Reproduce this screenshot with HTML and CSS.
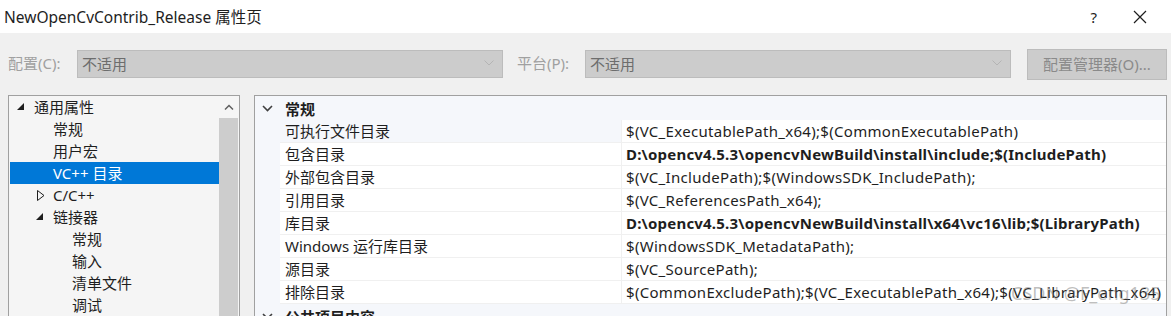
FILE: index.html
```html
<!DOCTYPE html>
<html lang="zh-CN">
<head>
    <meta charset="UTF-8">
    <title>NewOpenCvContrib_Release 属性页</title>
    <link rel="stylesheet" href="styles.css">
</head>
<body>
    <div class="dialog">
        <header class="titlebar">
            <span class="title">NewOpenCvContrib_Release 属性页</span>
            <div class="title-buttons">
                <span class="help">?</span>
                <svg class="close" width="14" height="14" viewBox="0 0 14 14">
                    <path d="M1 1 L13 13 M13 1 L1 13" stroke="#1e1e1e" stroke-width="1.2" fill="none"/>
                </svg>
            </div>
        </header>

        <div class="toolbar">
            <label class="field-label">配置(C):</label>
            <div class="combo">
                <span>不适用</span>
                <svg class="combo-arrow" width="10" height="6" viewBox="0 0 10 6"><path d="M0.5 0.5 L5 5 L9.5 0.5" stroke="#b4b4b4" fill="none"/></svg>
            </div>
            <label class="field-label second">平台(P):</label>
            <div class="combo">
                <span>不适用</span>
                <svg class="combo-arrow" width="10" height="6" viewBox="0 0 10 6"><path d="M0.5 0.5 L5 5 L9.5 0.5" stroke="#b4b4b4" fill="none"/></svg>
            </div>
            <button class="manager">配置管理器(O)...</button>
        </div>

        <div class="main">
            <div class="tree">
                <ul class="tree-list">
                    <li class="node lvl0"><svg class="exp" width="8" height="8" viewBox="0 0 8 8"><path d="M7 0 L7 7 L0 7 Z" fill="#1e1e1e"/></svg>通用属性</li>
                    <li class="node lvl1">常规</li>
                    <li class="node lvl1">用户宏</li>
                    <li class="node lvl1 selected">VC++ 目录</li>
                    <li class="node lvl1 parent"><svg class="col" width="8" height="11" viewBox="0 0 8 11"><path d="M0.5 0.5 L7 5.5 L0.5 10.5 Z" fill="none" stroke="#1e1e1e"/></svg>C/C++</li>
                    <li class="node lvl1 parent"><svg class="exp" width="8" height="8" viewBox="0 0 8 8"><path d="M7 0 L7 7 L0 7 Z" fill="#1e1e1e"/></svg>链接器</li>
                    <li class="node lvl2">常规</li>
                    <li class="node lvl2">输入</li>
                    <li class="node lvl2">清单文件</li>
                    <li class="node lvl2">调试</li>
                </ul>
                <div class="scrollbar">
                    <div class="scroll-up">
                        <svg width="10" height="6" viewBox="0 0 10 6"><path d="M1 5.5 L5 1.5 L9 5.5" stroke="#606060" stroke-width="1.5" fill="none"/></svg>
                    </div>
                    <div class="scroll-thumb"></div>
                </div>
            </div>

            <div class="grid">
                <div class="group">
                    <svg class="chev" width="11" height="7" viewBox="0 0 11 7"><path d="M1 1 L5.5 5.5 L10 1" stroke="#404040" stroke-width="1.6" fill="none"/></svg>
                    <span>常规</span>
                </div>
                <div class="row first">
                    <div class="name">可执行文件目录</div>
                    <div class="value">$(VC_ExecutablePath_x64);$(CommonExecutablePath)</div>
                </div>
                <div class="row">
                    <div class="name">包含目录</div>
                    <div class="value bold">D:\opencv4.5.3\opencvNewBuild\install\include;$(IncludePath)</div>
                </div>
                <div class="row">
                    <div class="name">外部包含目录</div>
                    <div class="value">$(VC_IncludePath);$(WindowsSDK_IncludePath);</div>
                </div>
                <div class="row">
                    <div class="name">引用目录</div>
                    <div class="value">$(VC_ReferencesPath_x64);</div>
                </div>
                <div class="row">
                    <div class="name">库目录</div>
                    <div class="value bold">D:\opencv4.5.3\opencvNewBuild\install\x64\vc16\lib;$(LibraryPath)</div>
                </div>
                <div class="row">
                    <div class="name">Windows 运行库目录</div>
                    <div class="value">$(WindowsSDK_MetadataPath);</div>
                </div>
                <div class="row">
                    <div class="name">源目录</div>
                    <div class="value">$(VC_SourcePath);</div>
                </div>
                <div class="row">
                    <div class="name">排除目录</div>
                    <div class="value">$(CommonExcludePath);$(VC_ExecutablePath_x64);$(VC_LibraryPath_x64)</div>
                </div>
                <div class="group">
                    <svg class="chev" width="11" height="7" viewBox="0 0 11 7"><path d="M1 1 L5.5 5.5 L10 1" stroke="#404040" stroke-width="1.6" fill="none"/></svg>
                    <span>公共项目内容</span>
                </div>
            </div>
        </div>

        <div class="watermark">CSDN @F_eng135</div>
    </div>
</body>
</html>
```

FILE: styles.css
```css
body {
    margin: 0;
    padding: 0;
    font-family: "Noto Sans", "Noto Sans CJK SC", sans-serif;
    font-size: 15px;
    color: #1e1e1e;
    background-color: #f0f0f0;
}

.dialog {
    position: relative;
    width: 1171px;
    height: 316px;
    overflow: hidden;
    background-color: #f0f0f0;
}

.titlebar {
    height: 33px;
    background-color: white;
    display: flex;
    align-items: center;
    justify-content: space-between;
    padding: 0 24px 0 4px;
}

.title {
    font-size: 15.5px;
    margin-top: -1px;
}

.title-buttons {
    display: flex;
    align-items: center;
    gap: 36px;
}

.help {
    font-size: 15px;
}

.toolbar {
    height: 62px;
    display: flex;
    align-items: center;
    padding: 0 4px 0 8px;
    box-sizing: border-box;
}

.field-label {
    color: #a0a0a0;
    width: 69px;
    margin-top: -3px;
}

.field-label.second {
    margin-left: 14px;
    width: 68px;
}

.combo {
    width: 426px;
    height: 28px;
    box-sizing: border-box;
    background-color: #cccccc;
    border: 1px solid #bcbcbc;
    display: flex;
    align-items: center;
    justify-content: space-between;
    padding: 0 8px 2px 4px;
    color: #6d6d6d;
}

.manager {
    margin-left: 16px;
    width: 140px;
    height: 31px;
    background-color: #cccccc;
    border: 1px solid #bcbcbc;
    color: #8a8a8a;
    font-family: inherit;
    font-size: 15px;
    padding: 0 0 2px 0;
}

.main {
    display: flex;
    gap: 14px;
    padding: 0 4px 0 8px;
}

.tree {
    width: 232px;
    height: 240px;
    box-sizing: border-box;
    border: 1px solid #a0a0a0;
    background-color: #f5f5f5;
    display: flex;
    padding-left: 1px;
}

.tree-list {
    list-style: none;
    margin: 0;
    padding: 0;
    flex: 1;
}

.node {
    height: 22px;
    line-height: 22px;
    display: flex;
    align-items: center;
    white-space: nowrap;
}

.lvl0 {
    padding-left: 24px;
}

.lvl1 {
    padding-left: 43px;
}

.lvl2 {
    padding-left: 62px;
}

.node .exp {
    margin-left: -17px;
    margin-right: 9px;
}

.node .col {
    margin-left: -16px;
    margin-right: 8px;
}

.selected {
    background-color: #0078d7;
    color: white;
}

.scrollbar {
    width: 19px;
    margin-right: 1px;
    display: flex;
    flex-direction: column;
}

.scroll-up {
    height: 22px;
    display: flex;
    align-items: center;
    justify-content: center;
}

.scroll-thumb {
    flex: 1;
    background-color: #cdcdcd;
}

.grid {
    width: 913px;
    height: 240px;
    box-sizing: border-box;
    border: 1px solid #a0a0a0;
    border-bottom: none;
    background-color: #f5f7fb;
}

.group {
    height: 24px;
    display: flex;
    align-items: center;
    font-weight: bold;
    padding-left: 7px;
}

.group .chev {
    margin-right: 12px;
}

.row {
    display: flex;
    height: 23px;
    margin-left: 25px;
    background-color: white;
    border-bottom: 1px solid #f0f0f0;
    box-sizing: border-box;
}

.row.first .name {
    background-color: #f5f7fb;
}

.name {
    width: 342px;
    padding-left: 5px;
    line-height: 22px;
    box-sizing: border-box;
    border-right: 1px solid #f0f0f0;
    white-space: nowrap;
}

.value {
    flex: 1;
    padding-left: 4px;
    line-height: 22px;
    white-space: nowrap;
    letter-spacing: 0.3px;
}

.value.bold {
    font-weight: bold;
    letter-spacing: 0.2px;
}

.watermark {
    position: absolute;
    left: 1011px;
    top: 281px;
    font-size: 18px;
    color: rgba(110, 110, 110, 0.45);
    white-space: nowrap;
}
```
